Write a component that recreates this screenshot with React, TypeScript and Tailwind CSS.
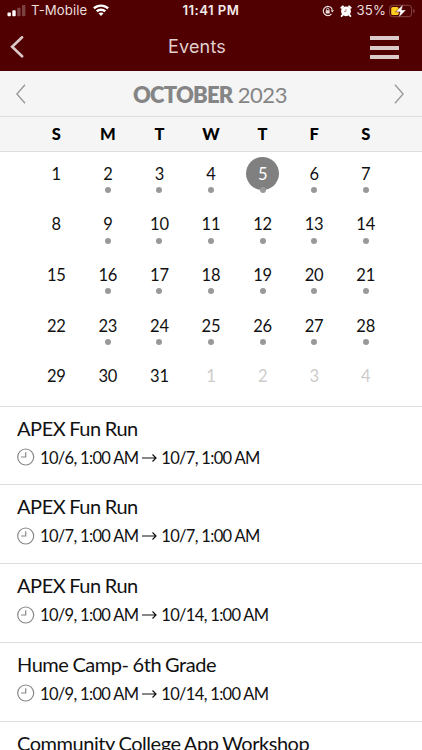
// App.tsx

interface EventProps {
  title: string;
  start: string;
  end?: string;
}

const weekdays = ["S", "M", "T", "W", "T", "F", "S"];
const days = Array.from({ length: 35 }, (_, i) => (i < 31 ? i + 1 : i - 30));

const events: EventProps[] = [
  { title: "APEX Fun Run", start: "10/6, 1:00 AM", end: "10/7, 1:00 AM" },
  { title: "APEX Fun Run", start: "10/7, 1:00 AM", end: "10/7, 1:00 AM" },
  { title: "APEX Fun Run", start: "10/9, 1:00 AM", end: "10/14, 1:00 AM" },
  { title: "Hume Camp- 6th Grade", start: "10/9, 1:00 AM", end: "10/14, 1:00 AM" },
  { title: "Community College App Workshop", start: "" },
];

function StatusBar() {
  return (
    <div className="flex h-[22px] items-center pl-[7px] pr-[7px] text-[#eadfdf]">
      <div className="flex w-[124px] items-center">
        <svg width="19" height="12" viewBox="0 0 19 12" className="mt-px shrink-0">
          <rect x="0.5" y="7.5" width="3.4" height="3.8" rx="0.8" fill="#fff" />
          <rect x="5.3" y="5.3" width="3.4" height="6" rx="0.8" fill="#fff" />
          <rect x="10.2" y="2.8" width="3.4" height="8.5" rx="0.8" fill="#7b4040" />
          <rect x="15" y="0" width="3.4" height="11.3" rx="0.8" fill="#7b4040" />
        </svg>
        <span className="ml-[5px] whitespace-nowrap text-[13.2px] tracking-[0.1px]">T-Mobile</span>
        <svg width="18" height="13" viewBox="0 0 18 13" className="ml-[5px] shrink-0" fill="#fff">
          <path d="M9 2.800c2.400 0 4.400.9 6.200 2.500l1.800-1.900C14.800 1.400 12 .4 9 .4S3.200 1.400 1 3.400l1.800 1.900C4.600 3.700 6.600 2.800 9 2.800z" />
          <path d="M9 7c1.300 0 2.300.4 3.300 1.200l1.800-1.800C12.600 5.100 10.900 4.400 9 4.400s-3.600.7-5.100 2l1.800 1.800C6.700 7.400 7.700 7 9 7z" />
          <path d="M9 8.400c-1 0-1.800.3-2.500.9L9 12l2.500-2.700C10.800 8.700 10 8.400 9 8.400z" />
        </svg>
      </div>
      <span className="w-[160px] text-center text-[13.2px] font-semibold tracking-[0.45px] text-[#f3eaea]">11:41 PM</span>
      <div className="flex flex-1 items-center justify-end">
        <svg width="12" height="12" viewBox="0 0 12 12" className="shrink-0" fill="none" stroke="#eadfdf">
          <path d="M9.500 8.800A4.600 4.600 0 1 1 10.300 4.800" strokeWidth="1.200" />
          <path d="M8.600 5.200H12L10.300 7.600z" fill="#eadfdf" stroke="none" />
          <rect x="3.700" y="5.300" width="4" height="3.100" rx=".4" fill="#eadfdf" stroke="none" />
          <path d="M4.500 5.500V4.400a1.200 1.200 0 0 1 2.400 0v1.100" strokeWidth=".9" />
        </svg>
        <svg width="12" height="12" viewBox="0 0 12 12" className="ml-[6px] shrink-0">
          <circle cx="6" cy="6.300" r="4.900" fill="#fff" />
          <path d="M1.400 2.800 2.900 1.400M10.600 2.800 9.100 1.400M2.500 10l-.8 1M9.500 10l.8 1" stroke="#fff" strokeWidth="2" strokeLinecap="round" />
          <path d="M6 4v2.400H4" stroke="#9a6464" strokeWidth=".8" fill="none" />
        </svg>
        <span className="ml-[5px] text-[13.2px] tracking-[0.1px]">35%</span>
        <svg width="26" height="14" viewBox="0 0 26 14" className="ml-[3px] shrink-0">
          <rect x=".6" y="1.300" width="22" height="11.400" rx="3" fill="none" stroke="#844848" />
          <path d="M24.300 5v4c1-.3 1.400-1.100 1.400-2s-.4-1.700-1.400-2z" fill="#844848" />
          <rect x="2.200" y="2.900" width="7.500" height="8.200" rx="1.500" fill="#ffce1f" />
          <path d="M14.300.2 6.400 7.900h4.700L9.500 13.800l7.700-7.900h-4.500z" fill="#fff" stroke="#500000" strokeWidth=".5" />
        </svg>
      </div>
    </div>
  );
}

function Header() {
  return (
    <header className="h-[71px] bg-[#500000] font-[Inter,sans-serif]">
      <StatusBar />
      <div className="flex h-[49px] items-center pl-[9px] pr-[23px]">
        <svg width="29" height="22" viewBox="0 0 29 22" fill="none" stroke="#dcc9c9" strokeWidth="2.600">
          <path d="M13.100 1.300 3.100 10.800 13.100 20.300" strokeLinecap="round" />
        </svg>
        <h1 className="flex-1 pr-[14px] text-center text-[18px] tracking-[0.2px] text-[#e0d0d0]">Events</h1>
        <div className="mt-[2px] flex w-[29px] flex-col gap-[5.500px]">
          <div className="h-1 bg-[#dccaca]" />
          <div className="h-1 bg-[#dccaca]" />
          <div className="h-1 bg-[#dccaca]" />
        </div>
      </div>
    </header>
  );
}

function Chevron({ className }: { className?: string }) {
  return (
    <svg width="10" height="20" viewBox="0 0 10 20" fill="none" stroke="#999" strokeWidth="1.400" className={className}>
      <path d="M9 .8.9 10 9 19.200" />
    </svg>
  );
}

function Calendar() {
  return (
    <section className="border-b border-[#dedede]">
      <div className="flex h-[46px] items-center justify-between border-b border-[#dedede] bg-[#f5f5f5] pl-[16px] pr-[18px]">
        <Chevron />
        <h2 className="pt-px text-[22px] tracking-[-0.4px] text-[#858585]">
          <span className="font-extrabold tracking-[-0.8px]">OCTOBER</span> 2023
        </h2>
        <Chevron className="rotate-180" />
      </div>
      <div className="grid h-[35px] grid-cols-7 items-center border-b border-[#dedede] bg-[#f5f5f5] px-[30.500px] pt-px text-center text-[16.500px] font-black">
        {weekdays.map((day, i) => (
          <span key={i}>{day}</span>
        ))}
      </div>
      <div className="grid h-[253.500px] grid-cols-7 grid-rows-5 px-[30.500px] text-[16.500px] tracking-[-0.2px]">
        {days.map((day, i) => {
          const hasEvent = i < 28 && i % 7 !== 0;
          const selected = i === 4;
          return (
            <div key={i} className="flex flex-col items-center pt-[5px]">
              <div
                className={
                  selected
                    ? "flex size-[33px] items-center justify-center rounded-full bg-[#808080] pt-[2px] text-white"
                    : i > 30
                      ? "flex size-[33px] items-center justify-center pt-px text-[#ccc]"
                      : "flex size-[33px] items-center justify-center pt-px text-[#111]"
                }
              >
                {day}
              </div>
              {hasEvent && <div className="-mt-[3px] size-[6px] rounded-full bg-[#999]" />}
            </div>
          );
        })}
      </div>
    </section>
  );
}

function EventRow({ event }: { event: EventProps }) {
  return (
    <div className="h-[78.800px] border-b border-[#dedede] pl-[17px] pt-[8px] text-[#111]">
      <h3 className="text-[20px] leading-[26px] tracking-[-0.45px] [word-spacing:-0.7px]">{event.title}</h3>
      {event.end && (
        <div className="mt-[6px] flex items-center text-[16.500px] leading-[22px] tracking-[-0.68px]">
          <svg width="18" height="18" viewBox="0 0 18 18" className="-mt-px mr-[5px]" fill="none" stroke="#888">
            <circle cx="8.700" cy="9" r="8" strokeWidth="1.200" />
            <path d="M8.700 4.200V9H4" strokeWidth="1.200" />
          </svg>
          <span>{event.start}</span>
          <svg width="15" height="10" viewBox="0 0 15 10" className="mx-1" fill="none" stroke="#111" strokeWidth="1.200">
            <path d="M0 5h14M10.500 1.500 14 5l-3.500 3.500" />
          </svg>
          <span>{event.end}</span>
        </div>
      )}
    </div>
  );
}

export default function App() {
  return (
    <div className="h-[750px] w-[422px] overflow-hidden bg-white font-[Lato,sans-serif]">
      <Header />
      <Calendar />
      {events.map((event, i) => (
        <EventRow key={i} event={event} />
      ))}
    </div>
  );
}
